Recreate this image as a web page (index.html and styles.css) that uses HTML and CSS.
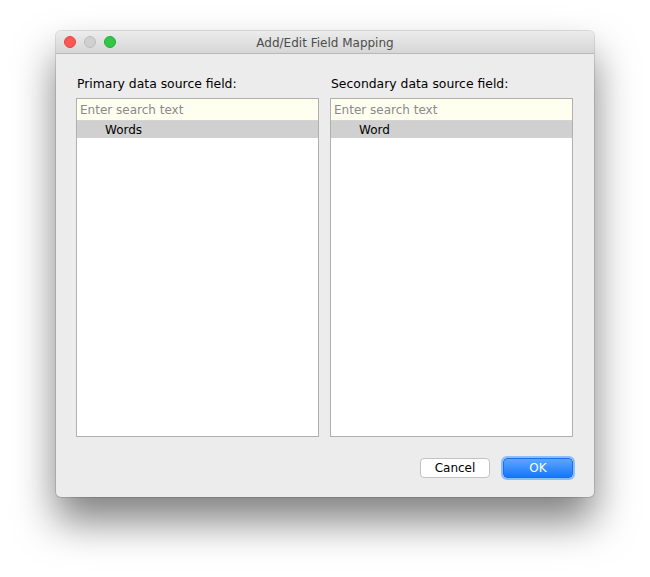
FILE: index.html
```html
<!DOCTYPE html>
<html>
<head>
<meta charset="utf-8">
<link rel="stylesheet" href="styles.css">
</head>
<body>
<div class="stage">
  <div class="window">
    <div class="titlebar">
      <div class="lights">
        <span class="light red"></span>
        <span class="light gray"></span>
        <span class="light green"></span>
      </div>
      <div class="title">Add/Edit Field Mapping</div>
    </div>
    <div class="content">
      <div class="columns">
        <div class="col">
          <div class="label">Primary data source field:</div>
          <div class="list">
            <div class="search">Enter search text</div>
            <div class="row">Words</div>
          </div>
        </div>
        <div class="col">
          <div class="label">Secondary data source field:</div>
          <div class="list">
            <div class="search">Enter search text</div>
            <div class="row">Word</div>
          </div>
        </div>
      </div>
      <div class="buttons">
        <button class="btn cancel">Cancel</button>
        <button class="btn ok">OK</button>
      </div>
    </div>
  </div>
</div>
</body>
</html>
```
FILE: styles.css
```css
html, body {
  margin: 0;
  padding: 0;
  background: #ffffff;
}
body {
  width: 650px;
  height: 577px;
  overflow: hidden;
  font-family: "DejaVu Sans", Verdana, sans-serif;
  font-size: 12px;
  color: #000;
}
.stage {
  padding: 31px 0 0 56px;
}
.window {
  width: 538px;
  height: 466px;
  background: #ececec;
  border-radius: 5px;
  box-shadow: 0 0 0 1px rgba(0,0,0,0.12), 0 24px 40px rgba(0,0,0,0.5);
  display: flex;
  flex-direction: column;
  overflow: hidden;
}
.titlebar {
  height: 22px;
  background: linear-gradient(#ececec, #d6d6d6);
  border-bottom: 1px solid #b8b8b8;
  display: flex;
  align-items: center;
  position: relative;
  flex: none;
}
.lights {
  display: flex;
  gap: 8px;
  padding-left: 8px;
}
.light {
  width: 12px;
  height: 12px;
  border-radius: 50%;
  box-sizing: border-box;
}
.red { background: #fc5753; border: 1px solid #df4744; }
.gray { background: #d0d0d0; border: 1px solid #bdbdbd; }
.green { background: #33c748; border: 1px solid #27aa35; }
.title {
  position: absolute;
  left: 0;
  right: 0;
  top: 1px;
  line-height: 22px;
  text-align: center;
  color: #4d4d4d;
  font-size: 12px;
}
.content {
  padding: 21px 20px 0 20px;
  display: flex;
  flex-direction: column;
}
.columns {
  display: flex;
  gap: 11px;
}
.col {
  width: 243px;
  display: flex;
  flex-direction: column;
}
.label {
  height: 23px;
  padding-left: 1px;
  line-height: 17px;
  font-size: 12.4px;
}
.list {
  height: 339px;
  border: 1px solid #b0b0b0;
  background: #ffffff;
  box-sizing: border-box;
}
.search {
  height: 21px;
  background: #fffff0;
  border-bottom: 1px solid #d4d4d4;
  color: #8a8a8a;
  line-height: 22px;
  padding-left: 3px;
}
.row {
  height: 17px;
  background: #d0d0d0;
  line-height: 18px;
  padding-left: 28px;
}
.buttons {
  display: flex;
  justify-content: flex-end;
  gap: 13px;
  padding-top: 21px;
  padding-right: 1px;
}
.btn {
  font-family: inherit;
  font-size: 12px;
  height: 20px;
  border-radius: 4px;
  padding: 0;
  margin: 0;
}
.cancel {
  width: 70px;
  background: #ffffff;
  border: 1px solid #c2c2c2;
  color: #000;
}
.ok {
  width: 70px;
  background: linear-gradient(#5ea6ff, #1677fb);
  border: 1px solid #1a6ef0;
  color: #ffffff;
  box-shadow: 0 0 0 2px #8cbdf9;
}
```
